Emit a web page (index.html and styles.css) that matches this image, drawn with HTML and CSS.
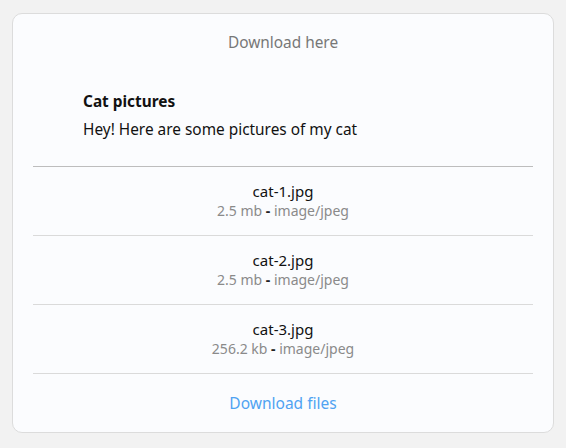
FILE: index.html
```html
<!DOCTYPE html>
<html>
<head>
<meta charset="utf-8">
<link rel="stylesheet" href="styles.css">
</head>
<body>
<div class="card">
  <div class="header">Download here</div>
  <div class="message">
    <div class="title">Cat pictures</div>
    <div class="text">Hey! Here are some pictures of my cat</div>
  </div>
  <ul class="files">
    <li class="file">
      <div class="name">cat-1.jpg</div>
      <div class="meta">2.5 mb <span class="dash">-</span> image/jpeg</div>
    </li>
    <li class="file">
      <div class="name">cat-2.jpg</div>
      <div class="meta">2.5 mb <span class="dash">-</span> image/jpeg</div>
    </li>
    <li class="file">
      <div class="name">cat-3.jpg</div>
      <div class="meta">256.2 kb <span class="dash">-</span> image/jpeg</div>
    </li>
  </ul>
  <div class="footer"><a class="download">Download files</a></div>
</div>
</body>
</html>
```
FILE: styles.css
```css
html, body {
  margin: 0;
  background: #f2f2f2;
}
body {
  padding: 13px 12px 0 12px;
  font-family: "Noto Sans", "Open Sans", sans-serif;
  font-size: 15px;
  line-height: 20px;
  color: #111;
}
.card {
  background: #fbfcfe;
  border: 1px solid #dcdcdc;
  border-radius: 10px;
  padding: 19px 20px 19px 20px;
}
.header {
  text-align: center;
  color: #777;
  font-size: 15.4px;
}
.message {
  padding: 39px 50px 26px 50px;
  font-size: 15.4px;
}
.title {
  font-weight: bold;
  margin-bottom: 8px;
}
.files {
  list-style: none;
  margin: 0;
  padding: 0;
  border-top: 1px solid #bdbdbd;
}
.file {
  padding: 14px 0;
  border-bottom: 1px solid #dadada;
  text-align: center;
}
.meta {
  font-size: 14px;
  color: #8a8a8a;
}
.dash {
  color: #222;
  font-weight: bold;
}
.footer {
  text-align: center;
  padding-top: 19px;
}
.download {
  color: #4fa3f2;
  font-size: 15.5px;
}
```
